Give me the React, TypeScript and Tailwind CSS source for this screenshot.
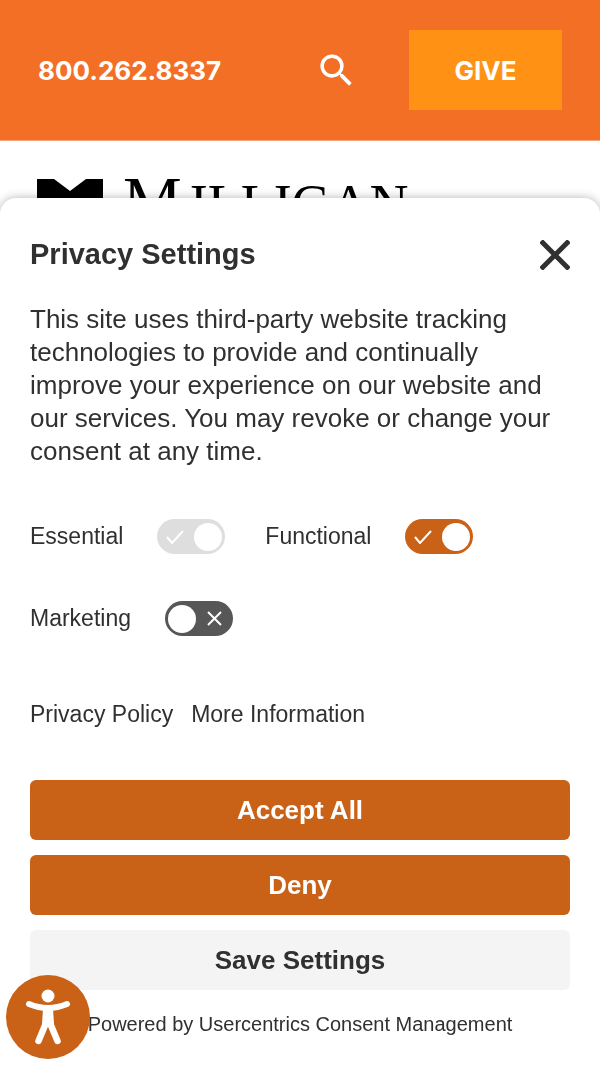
import { useState } from "react";
import { MdSearch } from "react-icons/md";

type ToggleProps = {
  id: string;
  label: string;
  defaultChecked?: boolean;
  disabled?: boolean;
};

function Toggle({ id, label, defaultChecked = false, disabled = false }: ToggleProps) {
  const [checked, setChecked] = useState(defaultChecked);

  let track = "bg-[#575757]";
  if (disabled) track = "bg-[#dedede]";
  else if (checked) track = "bg-[#c96116]";

  return (
    <label htmlFor={id} className="relative flex items-center gap-[34px] text-[23px] leading-[35px]">
      {label}
      <input
        id={id}
        type="checkbox"
        className="peer sr-only"
        checked={checked}
        disabled={disabled}
        onChange={(e) => setChecked(e.target.checked)}
      />
      <span
        className={`flex h-[35px] w-[68px] items-center justify-between rounded-full px-[3px] peer-focus-visible:ring-2 ${track}`}
      >
        {checked ? (
          <>
            <svg viewBox="0 0 18 14" className="ml-1.5 h-3.5 w-[18px]" fill="none" stroke="white" strokeWidth="2">
              <path d="M1 7l5 6L17 1" />
            </svg>
            <span className="size-7 rounded-full bg-white" />
          </>
        ) : (
          <>
            <span className="size-7 rounded-full bg-white" />
            <svg viewBox="0 0 15 15" className="mr-2 size-[15px]" fill="none" stroke="white" strokeWidth="2">
              <path d="M1 1l13 13M14 1L1 14" />
            </svg>
          </>
        )}
      </span>
    </label>
  );
}

function Header() {
  return (
    <header className="flex items-center border-b border-[#f4a57e] bg-[#f46f26] px-[38px] py-[30px] font-['Inter',sans-serif] text-[26px] font-bold text-white">
      <a href="tel:8002628337">800.262.8337</a>
      <button type="button" aria-label="Search" className="mr-[51px] ml-auto">
        <MdSearch className="size-[43px]" />
      </button>
      <a href="#give" className="flex h-20 w-[153px] items-center justify-center bg-[#ff9215]">
        GIVE
      </a>
    </header>
  );
}

function Logo() {
  return (
    <a href="#home" className="flex items-start gap-5 px-[37px] pt-[38px] text-black">
      <svg viewBox="0 0 66 60" className="h-[60px] w-[66px]">
        <path d="M0 0h17l16 12L49 0h17v60H0z" />
      </svg>
      <span className="font-['Liberation_Serif',serif] text-[54px] leading-[42px]">
        <span className="mr-2 text-[66px]">M</span>ILLIGAN
      </span>
    </a>
  );
}

function PrivacySettings() {
  return (
    <section
      role="dialog"
      aria-labelledby="privacy-title"
      className="fixed inset-x-0 bottom-0 rounded-t-2xl bg-white px-[30px] pt-10 pb-[27px] text-[#303030] shadow-[0_0_10px_rgba(0,0,0,0.3)]"
    >
      <div className="flex h-[34px] items-center justify-between">
        <h2 id="privacy-title" className="text-[29px] font-bold">
          Privacy Settings
        </h2>
        <button type="button" aria-label="Close">
          <svg viewBox="0 0 30 30" className="size-[30px]" fill="none" stroke="currentColor" strokeWidth="5">
            <path d="M1 1l28 28M29 1L1 29" />
          </svg>
        </button>
      </div>

      <p className="mt-[31px] text-[26px] leading-[33px]">
        This site uses third-party website tracking technologies to provide and continually improve your experience on
        our website and our services. You may revoke or change your consent at any time.
      </p>

      <div className="mt-[51px] flex flex-wrap gap-x-10 gap-y-[47px]">
        <Toggle id="essential" label="Essential" defaultChecked disabled />
        <Toggle id="functional" label="Functional" defaultChecked />
        <Toggle id="marketing" label="Marketing" />
      </div>

      <nav className="mt-[65px] flex gap-[18px] text-[23px] leading-[26px]">
        <a href="#privacy-policy">Privacy Policy</a>
        <a href="#more-information">More Information</a>
      </nav>

      <div className="mt-[53px] flex flex-col gap-[15px] text-[26px] font-bold">
        <button type="button" className="h-[60px] rounded-md bg-[#c96116] text-white">
          Accept All
        </button>
        <button type="button" className="h-[60px] rounded-md bg-[#c96116] text-white">
          Deny
        </button>
        <button type="button" className="h-[60px] rounded-md bg-[#f4f4f4]">
          Save Settings
        </button>
      </div>

      <p className="mt-5 text-center text-[20px] leading-[28px]">
        Powered by <a href="#usercentrics">Usercentrics Consent Management</a>
      </p>
    </section>
  );
}

function AccessibilityButton() {
  return (
    <button
      type="button"
      aria-label="Accessibility options"
      className="fixed bottom-1.5 left-1.5 size-[84px] rounded-full bg-[#c96116]"
    >
      <svg viewBox="0 0 84 84" className="size-full" fill="none" stroke="white" strokeLinecap="round" strokeLinejoin="round">
        <circle cx="42" cy="21" r="6.5" fill="white" stroke="none" />
        <path d="M23 29Q42 37 61 29" strokeWidth="6" />
        <path d="M39 34h6l1 15h-8z" fill="white" strokeWidth="4" />
        <path d="M40 48L32.500 66M44 48l7.500 18" strokeWidth="6.5" />
      </svg>
    </button>
  );
}

export default function App() {
  return (
    <div className="min-h-screen bg-white font-['Liberation_Sans',sans-serif]">
      <Header />
      <Logo />
      <PrivacySettings />
      <AccessibilityButton />
    </div>
  );
}
